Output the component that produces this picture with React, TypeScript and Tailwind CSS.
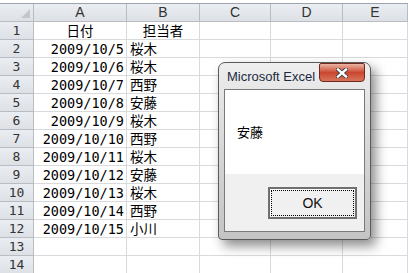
const rows: [string, string][] = [
  ['2009/10/5', '桜木'],
  ['2009/10/6', '桜木'],
  ['2009/10/7', '西野'],
  ['2009/10/8', '安藤'],
  ['2009/10/9', '桜木'],
  ['2009/10/10', '西野'],
  ['2009/10/11', '桜木'],
  ['2009/10/12', '安藤'],
  ['2009/10/13', '桜木'],
  ['2009/10/14', '西野'],
  ['2009/10/15', '小川'],
  ['', ''],
  ['', ''],
];

const cell = 'h-[18px] border-r border-b border-[#d9dadb] flex items-end leading-[16px] overflow-hidden whitespace-nowrap';
const head = 'h-[18px] border-r border-b border-[#b9bdc3] bg-gradient-to-b from-[#eaedf1] to-[#dde1e6] flex items-center justify-center text-[#333] text-[13px]';

function Row({ n, a, b, center }: { n: number; a: string; b: string; center?: boolean }) {
  return (
    <>
      <div className={head}>{n}</div>
      <div className={`${cell} ${center ? 'justify-center' : 'justify-end pr-[2px]'}`}>{a}</div>
      <div className={`${cell} ${center ? 'justify-center' : 'pl-[3px]'}`}>{b}</div>
      <div className={cell} />
      <div className={cell} />
      <div className={cell} />
    </>
  );
}

function CloseX() {
  return (
    <svg width="12" height="10" viewBox="0 0 12 10">
      <path d="M2 1.5 L10 8.5 M10 1.5 L2 8.5" stroke="#3a3a3a" strokeWidth="4.2" strokeLinecap="square" />
      <path d="M2 1.5 L10 8.5 M10 1.5 L2 8.5" stroke="#ffffff" strokeWidth="2.4" strokeLinecap="square" />
    </svg>
  );
}

export default function App() {
  return (
    <div className="relative w-[408px] h-[273px] overflow-hidden bg-white text-black font-['DejaVu_Sans_Mono','Noto_Sans_CJK_JP',monospace] text-[13.5px]">
      <div className="h-[4px] bg-white border-b border-[#9da3ab]" />
      <div className="grid grid-cols-[34px_93px_73px_71px_72px_1fr]">
        <div className={`${head} relative`}>
          <div className="absolute right-[3px] bottom-[3px] w-0 h-0 border-l-[9px] border-l-transparent border-b-[9px] border-b-[#c3c7cc]" />
        </div>
        {['A', 'B', 'C', 'D', 'E'].map((c) => (
          <div key={c} className={`${head} font-['Liberation_Sans',sans-serif] text-[14px]`}>{c}</div>
        ))}
        <Row n={1} a="日付" b="担当者" center />
        {rows.map((r, i) => (
          <Row key={i} n={i + 2} a={r[0]} b={r[1]} />
        ))}
      </div>

      <div className="absolute left-[218px] top-[62px] w-[153px] h-[178px] flex flex-col rounded-t-[7px] rounded-b-[4px] border border-[#5a5a5a] bg-gradient-to-b from-[#eeeeee] via-[#d6d6d6] to-[#c4c4c4] px-[5px] pb-[7px] shadow-[5px_6px_12px_rgba(0,0,0,0.45)]">
        <div className="h-[26px] flex items-start justify-between">
          <span className="pl-[3px] pt-[7px] text-[13px] leading-[14px] text-[#1b2a40] font-['Liberation_Sans',sans-serif]">Microsoft Excel</span>
          <div className="w-[46px] h-[19px] rounded-b-[4px] rounded-t-[2px] border border-[#6e2a1e] bg-gradient-to-b from-[#e9b4a6] via-[#c9472f] to-[#d9735b] flex items-center justify-center">
            <CloseX />
          </div>
        </div>
        <div className="flex-1 flex flex-col border border-[#7a7a7a]">
          <div className="h-[84px] bg-white pl-[12px] pt-[34px] text-[13px] leading-[16px] font-['Noto_Sans_CJK_JP',sans-serif]">安藤</div>
          <div className="flex-1 bg-[#f0f0f0] flex justify-end items-start pt-[13px] pr-[7px]">
            <div className="w-[89px] h-[32px] border-2 border-[#6f6f6f] bg-[#f0f0f0] p-[1px] shadow-[inset_1px_1px_0_#ffffff]">
              <div className="w-full h-full border border-dotted border-black flex items-center justify-center text-[14px] font-['Liberation_Sans',sans-serif] text-[#111]">
                OK
              </div>
            </div>
          </div>
        </div>
      </div>
    </div>
  );
}
